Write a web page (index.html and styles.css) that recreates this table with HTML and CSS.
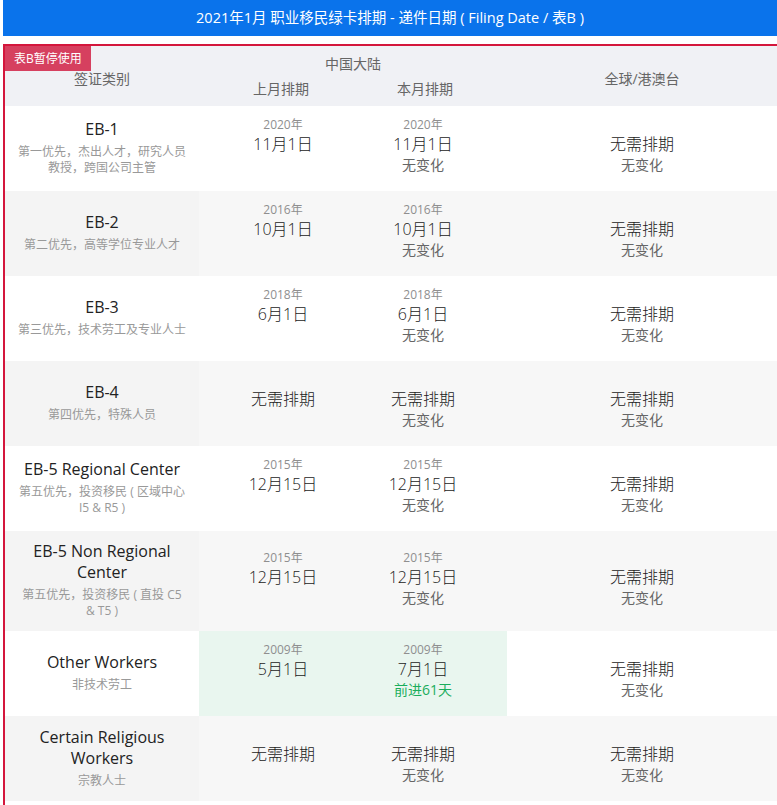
FILE: index.html
```html
<!DOCTYPE html>
<html lang="zh-CN">
<head>
<meta charset="utf-8">
<title>2021年1月 职业移民绿卡排期</title>
<link rel="stylesheet" href="styles.css">
</head>
<body>
<div class="page">
  <div class="title">2021年1月 职业移民绿卡排期 - 递件日期 ( Filing Date / 表B )</div>
  <div class="board">
    <span class="badge">表B暂停使用</span>
    <div class="row head">
      <div class="hcat">签证类别</div>
      <div class="hcn">
        <div class="hcn-title">中国大陆</div>
        <div class="pair"><span>上月排期</span><span>本月排期</span></div>
      </div>
      <div class="hworld">全球/港澳台</div>
    </div>

    <div class="row">
      <div class="cat"><div class="name">EB-1</div><div class="desc">第一优先，杰出人才，研究人员<br>教授，跨国公司主管</div></div>
      <div class="mid">
        <div class="cell"><div class="y">2020年</div><div class="d">11月1日</div><div class="c"></div></div>
        <div class="cell"><div class="y">2020年</div><div class="d">11月1日</div><div class="c">无变化</div></div>
      </div>
      <div class="cell"><div class="y"></div><div class="d">无需排期</div><div class="c">无变化</div></div>
    </div>

    <div class="row alt">
      <div class="cat"><div class="name">EB-2</div><div class="desc">第二优先，高等学位专业人才</div></div>
      <div class="mid">
        <div class="cell"><div class="y">2016年</div><div class="d">10月1日</div><div class="c"></div></div>
        <div class="cell"><div class="y">2016年</div><div class="d">10月1日</div><div class="c">无变化</div></div>
      </div>
      <div class="cell"><div class="y"></div><div class="d">无需排期</div><div class="c">无变化</div></div>
    </div>

    <div class="row">
      <div class="cat"><div class="name">EB-3</div><div class="desc">第三优先，技术劳工及专业人士</div></div>
      <div class="mid">
        <div class="cell"><div class="y">2018年</div><div class="d">6月1日</div><div class="c"></div></div>
        <div class="cell"><div class="y">2018年</div><div class="d">6月1日</div><div class="c">无变化</div></div>
      </div>
      <div class="cell"><div class="y"></div><div class="d">无需排期</div><div class="c">无变化</div></div>
    </div>

    <div class="row alt">
      <div class="cat"><div class="name">EB-4</div><div class="desc">第四优先，特殊人员</div></div>
      <div class="mid">
        <div class="cell"><div class="y"></div><div class="d">无需排期</div><div class="c"></div></div>
        <div class="cell"><div class="y"></div><div class="d">无需排期</div><div class="c">无变化</div></div>
      </div>
      <div class="cell"><div class="y"></div><div class="d">无需排期</div><div class="c">无变化</div></div>
    </div>

    <div class="row">
      <div class="cat"><div class="name">EB-5 Regional Center</div><div class="desc">第五优先，投资移民 ( 区域中心<br>I5 &amp; R5 )</div></div>
      <div class="mid">
        <div class="cell"><div class="y">2015年</div><div class="d">12月15日</div><div class="c"></div></div>
        <div class="cell"><div class="y">2015年</div><div class="d">12月15日</div><div class="c">无变化</div></div>
      </div>
      <div class="cell"><div class="y"></div><div class="d">无需排期</div><div class="c">无变化</div></div>
    </div>

    <div class="row alt">
      <div class="cat"><div class="name">EB-5 Non Regional<br>Center</div><div class="desc">第五优先，投资移民 ( 直投 C5<br>&amp; T5 )</div></div>
      <div class="mid">
        <div class="cell"><div class="y">2015年</div><div class="d">12月15日</div><div class="c"></div></div>
        <div class="cell"><div class="y">2015年</div><div class="d">12月15日</div><div class="c">无变化</div></div>
      </div>
      <div class="cell"><div class="y"></div><div class="d">无需排期</div><div class="c">无变化</div></div>
    </div>

    <div class="row">
      <div class="cat"><div class="name">Other Workers</div><div class="desc">非技术劳工</div></div>
      <div class="mid hl">
        <div class="cell"><div class="y">2009年</div><div class="d">5月1日</div><div class="c"></div></div>
        <div class="cell"><div class="y">2009年</div><div class="d">7月1日</div><div class="c up">前进61天</div></div>
      </div>
      <div class="cell"><div class="y"></div><div class="d">无需排期</div><div class="c">无变化</div></div>
    </div>

    <div class="row alt">
      <div class="cat"><div class="name">Certain Religious<br>Workers</div><div class="desc">宗教人士</div></div>
      <div class="mid">
        <div class="cell"><div class="y"></div><div class="d">无需排期</div><div class="c"></div></div>
        <div class="cell"><div class="y"></div><div class="d">无需排期</div><div class="c">无变化</div></div>
      </div>
      <div class="cell"><div class="y"></div><div class="d">无需排期</div><div class="c">无变化</div></div>
    </div>
    <div class="row tail"></div>
  </div>
</div>
</body>
</html>
```

FILE: styles.css
```css
* { box-sizing: border-box; }

html, body {
  margin: 0;
  padding: 0;
  background: #ffffff;
  overflow: hidden;
}

body {
  font-family: "Open Sans", "Noto Sans CJK SC", sans-serif;
  color: #222222;
}

.page {
  margin-left: 3px;
  width: 776px;
}

.title {
  width: 774px;
  height: 36px;
  background: #0a73eb;
  color: #ffffff;
  font-size: 14.5px;
  line-height: 36px;
  text-align: center;
}

.board {
  position: relative;
  margin-top: 8px;
  width: 776px;
  border: 2px solid #d4163c;
  border-bottom: none;
}

.badge {
  position: absolute;
  top: 0;
  left: 0;
  height: 25px;
  padding: 0 9px;
  background: #d6405f;
  color: #ffffff;
  font-size: 12px;
  line-height: 25px;
}

.row {
  display: grid;
  grid-template-columns: 194px 308px 1fr;
  background: #ffffff;
}

.row.alt { background: #f7f7f7; }
.row.alt .cat { background: #f4f4f4; }

.head {
  height: 60px;
  background: #f0f1f5;
  color: #666666;
  font-size: 14px;
}

.hcat, .hworld {
  display: flex;
  align-items: center;
  justify-content: center;
  padding-top: 3px;
}

.hcn {
  padding: 8px 10px 0;
  text-align: center;
}

.hcn-title { line-height: 20px; }

.pair {
  display: grid;
  grid-template-columns: 1fr 1fr;
  margin-top: 5px;
  line-height: 20px;
}

.cat {
  display: flex;
  flex-direction: column;
  justify-content: center;
  align-items: center;
  padding: 10px 6px 12px;
  text-align: center;
}

.name {
  font-size: 16px;
  line-height: 21px;
  color: #222222;
  white-space: nowrap;
}

.desc {
  margin-top: 4px;
  font-size: 12px;
  line-height: 16px;
  color: #999999;
  white-space: nowrap;
}

.mid {
  display: grid;
  grid-template-columns: 1fr 1fr;
  padding: 0 14px;
}

.mid.hl { background: #e9f6ef; }

.cell {
  display: flex;
  flex-direction: column;
  justify-content: center;
  align-items: center;
  padding: 11px 0 16px;
  text-align: center;
}

.y {
  height: 16px;
  font-size: 12px;
  line-height: 16px;
  color: #8f8f8f;
}

.d {
  height: 22px;
  font-size: 16px;
  line-height: 22px;
  font-weight: 300;
  color: #1a1a1a;
}

.c {
  height: 20px;
  font-size: 14px;
  line-height: 20px;
  color: #666666;
}

.c.up { color: #1aad5c; }

.tail { height: 20px; }
```
